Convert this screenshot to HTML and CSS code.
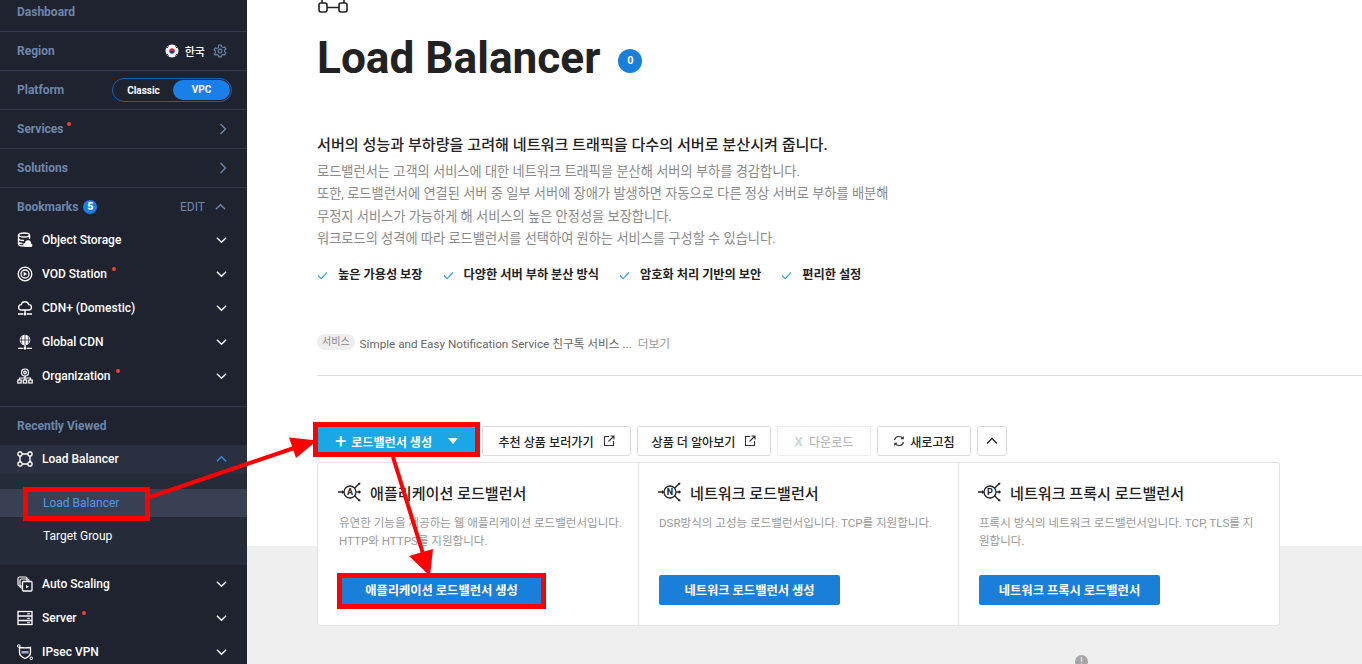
FILE: index.html
```html
<!DOCTYPE html>
<html lang="ko">
<head>
<meta charset="utf-8">
<title>Load Balancer</title>
<link rel="stylesheet" href="styles.css">
</head>
<body>
<svg class="defs" width="0" height="0" aria-hidden="true">
  <symbol id="chev" viewBox="0 0 12 8"><path d="M1 1.500l5 5 5-5" fill="none" stroke="currentColor" stroke-width="1.500"/></symbol>
  <symbol id="lbi" viewBox="0 0 30 24"><g fill="none" stroke="#222" stroke-width="1.600"><circle cx="15" cy="12" r="7.500"/><path d="M0 12h6M21 7l6-6M21 17l6 6M23 12h4"/></g><path d="M5 9.500l3 2.500-3 2.500zM26 9.500l3 2.500-3 2.500z" fill="#222"/><circle cx="26.500" cy="1.500" r="1.500" fill="#222"/><circle cx="26.500" cy="22.500" r="1.500" fill="#222"/></symbol>
</svg>
<div class="app">
  <aside class="side">
    <div class="row row-first"><span class="lab">Dashboard</span></div>
    <div class="row"><span class="lab">Region</span>
      <span class="right">
        <svg class="flag" viewBox="0 0 14 14"><circle cx="7" cy="7" r="6.500" fill="#f4f4f4"/><path d="M4.300 7a2.700 2.700 0 0 1 5.400 0z" fill="#d8263c"/><path d="M4.300 7a2.700 2.700 0 0 0 5.400 0z" fill="#26408f"/><path d="M2 4l1.500-1.500M2 10l1.500 1.500M12 4l-1.500-1.500M12 10l-1.500 1.500" stroke="#222" stroke-width="1"/></svg>
        <span class="kr">한국</span>
        <svg class="gear" viewBox="0 0 14 14"><path d="M5.800 1h2.400l.4 1.700 1.500.8 1.600-.6 1.200 2.100-1.300 1.100v1.700l1.300 1.100-1.200 2.100-1.600-.6-1.500.8-.4 1.700H5.800l-.4-1.700-1.500-.8-1.600.6L1.100 9.900l1.300-1.100V7.100L1.100 6 2.300 3.900l1.600.6 1.500-.8z" fill="none" stroke="#6d87ab" stroke-width="1.100"/><circle cx="7" cy="7" r="1.900" fill="none" stroke="#6d87ab" stroke-width="1.100"/></svg>
      </span>
    </div>
    <div class="row"><span class="lab">Platform</span>
      <span class="toggle"><span class="t-off">Classic</span><span class="t-on">VPC</span></span>
    </div>
    <div class="row"><span class="lab">Services<i class="dot dot-up"></i></span><svg class="chev-r" viewBox="0 0 8 12"><path d="M1.500 1l5 5-5 5" fill="none" stroke="#6d87ab" stroke-width="1.400"/></svg></div>
    <div class="row"><span class="lab">Solutions</span><svg class="chev-r" viewBox="0 0 8 12"><path d="M1.500 1l5 5-5 5" fill="none" stroke="#6d87ab" stroke-width="1.400"/></svg></div>
    <div class="row row-book"><span class="lab">Bookmarks<b class="count">5</b></span><span class="right"><span class="edit">EDIT</span><svg class="chev up-s"><use href="#chev"/></svg></span></div>
    <ul class="list list-book">
      <li class="item"><svg class="ic" viewBox="0 0 16 16"><g fill="none" stroke="#fff" stroke-width="1.400"><ellipse cx="7" cy="3" rx="5.500" ry="2"/><path d="M1.500 3v9c0 1 2 2 5 2M12.500 3v4M1.500 6.500c0 1 2 2 5.500 2M1.500 10c0 1 2 1.500 4 1.500"/></g><path d="M8 15a2 2 0 0 1 0-4 3 3 0 0 1 6 .5 1.800 1.800 0 0 1 0 3.500z" fill="#fff"/></svg><span>Object Storage</span><svg class="chev"><use href="#chev"/></svg></li>
      <li class="item"><svg class="ic" viewBox="0 0 16 16"><g fill="none" stroke="#fff" stroke-width="1.300"><circle cx="8" cy="8" r="6.800"/><circle cx="8" cy="8" r="4"/></g><path d="M6.600 5.800l3.500 2.200-3.500 2.200z" fill="#fff"/></svg><span>VOD Station<i class="dot dot-vod"></i></span><svg class="chev"><use href="#chev"/></svg></li>
      <li class="item"><svg class="ic" viewBox="0 0 16 16"><g fill="none" stroke="#fff" stroke-width="1.300"><path d="M4.500 10a2.700 2.700 0 0 1-.3-5.400 3.900 3.900 0 0 1 7.500 0 2.700 2.700 0 0 1 .1 5.400z"/><path d="M8 10v3M1 14h5M10 14h5"/></g><circle cx="8" cy="14" r="1.500" fill="#fff"/></svg><span>CDN+ (Domestic)</span><svg class="chev"><use href="#chev"/></svg></li>
      <li class="item"><svg class="ic" viewBox="0 0 16 16"><circle cx="8" cy="6" r="5.300" fill="#fff"/><path d="M3 6h10M8 1v10M5 2.500c-1 2-1 5 0 7M11 2.500c1 2 1 5 0 7" stroke="#1f2330" stroke-width=".8" fill="none"/><path d="M8 11v3M1 14.300h5M10 14.300h5" stroke="#fff" stroke-width="1.300"/><circle cx="8" cy="14.300" r="1.400" fill="#fff"/></svg><span>Global CDN</span><svg class="chev"><use href="#chev"/></svg></li>
      <li class="item"><svg class="ic" viewBox="0 0 16 16"><g fill="none" stroke="#fff" stroke-width="1.200"><circle cx="8" cy="4.500" r="3.500"/><circle cx="8" cy="4.500" r="1.300"/><path d="M8 8v2M2.500 12v-2h11v2M8 10v2"/><rect x=".8" y="12" width="3.400" height="3"/><rect x="6.300" y="12" width="3.400" height="3"/><rect x="11.800" y="12" width="3.400" height="3"/></g></svg><span>Organization<i class="dot dot-org"></i></span><svg class="chev"><use href="#chev"/></svg></li>
    </ul>
    <div class="row row-recent"><span class="lab">Recently Viewed</span></div>
    <div class="item item-open"><svg class="ic" viewBox="0 0 16 16"><g fill="none" stroke="#fff" stroke-width="1.400"><rect x="1" y="1" width="4" height="4" rx="1.500"/><rect x="11" y="1" width="4" height="4" rx="1.500"/><rect x="1" y="11" width="4" height="4" rx="1.500"/><rect x="11" y="11" width="4" height="4" rx="1.500"/><path d="M5 3h6M5 13h6M3 5v6M13 5v6"/></g></svg><span>Load Balancer</span><svg class="chev chev-blue"><use href="#chev"/></svg></div>
    <div class="sub">
      <a class="sub-link sub-active">Load Balancer</a>
      <a class="sub-link">Target Group</a>
    </div>
    <ul class="list list-bottom">
      <li class="item"><svg class="ic" viewBox="0 0 16 16"><g fill="none" stroke="#fff" stroke-width="1.200"><rect x="1" y="1" width="9" height="9" rx="1.500"/><rect x="3" y="3" width="9" height="9" rx="1.500"/></g><rect x="5.500" y="5.500" width="9.500" height="9.500" rx="1" fill="#1f2330" stroke="#fff" stroke-width="1.300"/><path d="M9 9l3 1.800L9 12.500z" fill="#fff"/></svg><span>Auto Scaling</span><svg class="chev"><use href="#chev"/></svg></li>
      <li class="item"><svg class="ic" viewBox="0 0 16 16"><g fill="none" stroke="#fff" stroke-width="1.300"><rect x="1" y="1.500" width="14" height="13"/><path d="M1 6h14M1 10.500h14"/></g><path d="M10 3.800h3M10 8.300h3M10 12.700h3" stroke="#fff"/></svg><span>Server<i class="dot dot-srv"></i></span><svg class="chev"><use href="#chev"/></svg></li>
      <li class="item"><svg class="ic" viewBox="0 0 16 16"><g fill="none" stroke="#fff" stroke-width="1.300"><path d="M2.500 3.500c3 .5 8 .5 11 0v5c0 3-3 5-5.500 6-2.500-1-5.500-3-5.500-6z"/></g><path d="M4.500 7h7v2.500h-7z" fill="#9fb0c8"/><circle cx="1.800" cy="2" r="1.300" fill="none" stroke="#fff"/><circle cx="14.300" cy="14.300" r="1.300" fill="none" stroke="#fff"/></svg><span>IPsec VPN</span><svg class="chev"><use href="#chev"/></svg></li>
    </ul>
  </aside>
  <main class="main">
    <svg class="top-ic" viewBox="0 0 30 14"><g fill="none" stroke="#222" stroke-width="1.600"><rect x="1" y="3" width="8" height="9" rx="2"/><rect x="21" y="3" width="8" height="9" rx="2"/><path d="M9 7.500h12M4 3V0M26 3V0"/></g></svg>
    <div class="title-row"><h1 class="title">Load Balancer</h1><span class="zero">0</span></div>
    <p class="lead">서버의 성능과 부하량을 고려해 네트워크 트래픽을 다수의 서버로 분산시켜 줍니다.</p>
    <p class="desc">로드밸런서는 고객의 서비스에 대한 네트워크 트래픽을 분산해 서버의 부하를 경감합니다.<br>또한, 로드밸런서에 연결된 서버 중 일부 서버에 장애가 발생하면 자동으로 다른 정상 서버로 부하를 배분해<br>무정지 서비스가 가능하게 해 서비스의 높은 안정성을 보장합니다.<br>워크로드의 성격에 따라 로드밸런서를 선택하여 원하는 서비스를 구성할 수 있습니다.</p>
    <ul class="checks">
      <li class="check"><svg class="ck" viewBox="0 0 12 10"><path d="M1 5l3.500 3.500L11 1.500" fill="none" stroke="#39a0e0" stroke-width="1.200"/></svg>높은 가용성 보장</li>
      <li class="check"><svg class="ck" viewBox="0 0 12 10"><path d="M1 5l3.500 3.500L11 1.500" fill="none" stroke="#39a0e0" stroke-width="1.200"/></svg>다양한 서버 부하 분산 방식</li>
      <li class="check"><svg class="ck" viewBox="0 0 12 10"><path d="M1 5l3.500 3.500L11 1.500" fill="none" stroke="#39a0e0" stroke-width="1.200"/></svg>암호화 처리 기반의 보안</li>
      <li class="check"><svg class="ck" viewBox="0 0 12 10"><path d="M1 5l3.500 3.500L11 1.500" fill="none" stroke="#39a0e0" stroke-width="1.200"/></svg>편리한 설정</li>
    </ul>
    <div class="notice"><span class="tag">서비스</span><span class="n-text">Simple and Easy Notification Service 친구톡 서비스 ...</span><span class="more">더보기</span></div>
    <div class="tools">
      <button class="btn btn-create"><span class="plus">+</span>로드밸런서 생성<span class="caret"></span></button>
      <button class="btn btn-w149">추천 상품 보러가기<svg class="ext" viewBox="0 0 12 12"><path d="M6 1.500H1.500v9h9V6M7.500 1H11v3.500M11 1L5.500 6.500" fill="none" stroke="#333" stroke-width="1.100"/></svg></button>
      <button class="btn btn-w134">상품 더 알아보기<svg class="ext" viewBox="0 0 12 12"><path d="M6 1.500H1.500v9h9V6M7.500 1H11v3.500M11 1L5.500 6.500" fill="none" stroke="#333" stroke-width="1.100"/></svg></button>
      <button class="btn btn-w94 btn-off"><b class="xl">X</b>다운로드</button>
      <button class="btn btn-w94"><svg class="ref" viewBox="0 0 12 12"><path d="M1.500 5a4.600 4.600 0 0 1 8.300-1.500M10.500 7a4.600 4.600 0 0 1-8.300 1.500" fill="none" stroke="#333" stroke-width="1.100"/><path d="M10.800 1v3.300H7.500zM1.200 11V7.700h3.300z" fill="#333"/></svg>새로고침</button>
      <button class="btn btn-w30"><svg class="chev-sm" viewBox="0 0 12 8"><path d="M1 6.500l5-5 5 5" fill="none" stroke="#222" stroke-width="1.300"/></svg></button>
    </div>
    <div class="cards">
      <section class="card">
        <h2 class="c-title"><span class="c-ic"><svg viewBox="0 0 30 24"><use href="#lbi"/></svg><em class="c-let">A</em></span>애플리케이션 로드밸런서</h2>
        <p class="c-desc c-nowrap">유연한 기능을 제공하는 웹 애플리케이션 로드밸런서입니다.<br>HTTP와 HTTPS를 지원합니다.</p>
        <button class="c-btn c-btn-wide">애플리케이션 로드밸런서 생성</button>
      </section>
      <section class="card">
        <h2 class="c-title"><span class="c-ic"><svg viewBox="0 0 30 24"><use href="#lbi"/></svg><em class="c-let">N</em></span>네트워크 로드밸런서</h2>
        <p class="c-desc">DSR방식의 고성능 로드밸런서입니다. TCP를 지원합니다.</p>
        <button class="c-btn">네트워크 로드밸런서 생성</button>
      </section>
      <section class="card">
        <h2 class="c-title"><span class="c-ic"><svg viewBox="0 0 30 24"><use href="#lbi"/></svg><em class="c-let">P</em></span>네트워크 프록시 로드밸런서</h2>
        <p class="c-desc">프록시 방식의 네트워크 로드밸런서입니다. TCP, TLS를 지원합니다.</p>
        <button class="c-btn">네트워크 프록시 로드밸런서</button>
      </section>
    </div>
    <span class="info-dot">!</span>
  </main>
</div>
<svg class="annot" viewBox="0 0 1362 664" aria-hidden="true">
  <g fill="none" stroke="#ff0000" stroke-width="5">
    <rect x="25.500" y="489.500" width="122" height="29"/>
    <rect x="315.500" y="424.500" width="162" height="30"/>
    <rect x="339.500" y="575.500" width="204" height="31"/>
  </g>
  <path d="M150 497L300 446M393 457L425 560" fill="none" stroke="#ff0000" stroke-width="4"/>
  <path d="M317 440.500L289 437.500 296 458zM430 576L409 556 433 549z" fill="#ff0000"/>
</svg>
</body>
</html>
```

FILE: styles.css
```css
* { box-sizing: border-box; }
html, body { margin: 0; padding: 0; height: 664px; overflow: hidden; background: #fff; }
body { font-family: Roboto, "Noto Sans CJK KR", sans-serif; color: #222; position: relative; }
.defs { position: absolute; }
ul { list-style: none; margin: 0; padding: 0; }
button { font-family: inherit; }

.app { display: flex; height: 664px; }

.side { width: 247px; flex: none; background: #1f2330; margin-top: -7px; height: 671px; overflow: hidden; font-size: 12px; font-weight: 500; }
.row { height: 39px; padding: 0 17px; border-bottom: 1px solid #353b4c; display: flex; align-items: center; justify-content: space-between; color: #6d87ab; }
.row-book { height: 35px; border: 0; padding-top: 3px; }
.row-recent { height: 39px; border: 0; border-top: 1px solid #353b4c; padding-top: 0; }
.lab { position: relative; font-weight: 700; display: flex; align-items: center; }
.right { display: flex; align-items: center; }
.flag { width: 14px; height: 14px; margin-right: 6px; }
.kr { color: #fff; font-size: 11px; margin-right: 8px; }
.gear { width: 14px; height: 14px; margin-right: 3px; }
.toggle { width: 120px; height: 24px; margin-right: -2px; border: 1px solid #1f5f9f; border-radius: 12px; display: flex; align-items: center; font-size: 10px; font-weight: 700; color: #fff; padding: 1px; }
.t-off { width: 59px; text-align: center; }
.t-on { flex: 1; height: 20px; line-height: 20px; border-radius: 10px; background: #1a7fe8; text-align: center; }
.chev-r { width: 8px; height: 12px; margin-right: 3px; }
.dot { position: absolute; width: 4px; height: 4px; border-radius: 50%; background: #f0402f; }
.dot-up { left: 50px; top: 0; }
.dot-vod { left: 70px; top: 0; }
.dot-org { left: 74px; top: 0; }
.dot-srv { left: 40px; top: 0; }
.count { width: 14px; height: 14px; margin-left: 5px; border-radius: 50%; background: #1a7fe8; color: #fff; font-size: 10px; line-height: 14px; text-align: center; }
.edit { font-weight: 400; margin-right: 10px; color: #6d87ab; }
.chev { width: 11px; height: 8px; color: #fff; flex: none; margin-left: auto; margin-right: 5px; }
.up-s { transform: rotate(180deg); color: #6d87ab; margin-right: 4px; }
.list-book { padding-bottom: 13px; }
.item { height: 34px; padding-left: 17px; padding-right: 15px; display: flex; align-items: center; color: #fff; font-weight: 500; }
.item > span { position: relative; }
.ic { width: 16px; height: 16px; margin-right: 9px; flex: none; }
.item-open { height: 29px; padding-bottom: 2px; background: #2b3040; }
.chev-blue { color: #2f8fe8; transform: rotate(180deg); }
.sub { height: 91px; background: #262b39; padding: 15px 0; display: flex; flex-direction: column; gap: 5px; }
.sub-link { height: 28px; line-height: 28px; padding-left: 43px; color: #fff; font-weight: 400; }
.sub-active { background: #3a4054; color: #4a9bf0; }
.list-bottom { padding-top: 2px; }

.main { flex: 1; min-width: 0; height: 664px; padding-left: 70px; background: linear-gradient(#fff 546px, #efefef 546px); position: relative; }
.top-ic { display: block; width: 30px; height: 14px; margin-left: 1px; }
.title-row { display: flex; align-items: center; margin-top: 17px; height: 54px; }
.title { margin: 0; font-size: 44.200px; line-height: 54px; font-weight: 700; color: #222; }
.zero { width: 24px; height: 24px; margin-left: 18px; margin-top: 6px; border-radius: 50%; background: #1a7fd8; color: #fff; font-size: 11px; font-weight: 700; line-height: 24px; text-align: center; }
.lead { margin: 50px 0 0; font-size: 15.120px; line-height: 20px; font-weight: 500; color: #222; }
.desc { margin: 6px 0 0; font-size: 13.220px; line-height: 22.300px; color: #8a8a8a; }
.checks { display: flex; margin-top: 16px; height: 18px; font-size: 12.200px; font-weight: 700; color: #222; }
.check { display: flex; align-items: center; margin-right: 20px; line-height: 18px; }
.ck { width: 11px; height: 9px; margin-right: 10px; }
.notice { display: flex; align-items: center; margin-top: 48px; height: 20px; font-size: 11.700px; color: #666; }
.tag { height: 16px; line-height: 16px; padding: 0 5px; border-radius: 8px; background: #eee; color: #888; font-size: 10px; margin-right: 5px; }
.more { margin-left: 6px; color: #999; }
.tools { margin-top: 23px; padding-top: 50px; border-top: 1px solid #ddd; display: flex; gap: 6px; height: 87px; align-items: flex-start; }
.btn { height: 30px; padding: 0; border: 1px solid #ddd; border-radius: 2px; background: #fff; color: #222; font-size: 12.100px; font-weight: 500; display: flex; align-items: center; justify-content: center; }
.btn-create { width: 159px; background: #1aa7e5; border: 0; color: #fff; font-weight: 700; }
.plus { font-size: 20px; font-weight: 400; margin-right: 5px; line-height: 1; }
.caret { width: 0; height: 0; margin-left: 16px; border-left: 5px solid transparent; border-right: 5px solid transparent; border-top: 6px solid #fff; }
.btn-w149 { width: 149px; }
.btn-w134 { width: 134px; }
.btn-w94 { width: 94px; }
.btn-w30 { width: 30px; }
.btn-off { border-color: #eee; color: #bbb; }
.xl { color: #c5dccb; font-size: 13px; margin-right: 6px; }
.ext { width: 12px; height: 12px; margin-left: 9px; }
.ref { width: 12px; height: 12px; margin-right: 5px; }
.chev-sm { width: 12px; height: 8px; }
.cards { width: 963px; height: 164px; display: flex; background: #fff; border: 1px solid #e3e3e3; border-radius: 3px; }
.card { flex: 0 0 320px; min-width: 0; padding: 0 20px; border-left: 1px solid #e3e3e3; position: relative; }
.card:first-child { border-left: 0; padding-left: 21px; }
.card:last-child { flex: 1 1 0; }
.c-title { margin: 17px 0 0; height: 24px; font-size: 15.100px; font-weight: 500; color: #222; display: flex; align-items: center; }
.c-ic { position: relative; width: 24px; height: 20px; margin: 0 8px 0 -1px; }
.c-ic svg { width: 24px; height: 20px; display: block; }
.c-let { position: absolute; left: 7px; top: 5px; width: 10px; text-align: center; font-style: normal; font-size: 9px; line-height: 10px; font-weight: 700; }
.c-desc { margin: 10px 0 0; height: 36px; font-size: 11.550px; line-height: 18px; color: #999; }
.c-nowrap { white-space: nowrap; }
.c-btn { display: block; margin-top: 25px; width: 181px; height: 30px; border: 0; border-radius: 2px; background: #1a7fd8; color: #fff; font-size: 12.250px; font-weight: 700; padding: 0; }
.c-btn-wide { width: 205px; }
.info-dot { position: absolute; left: 828px; top: 655px; width: 13px; height: 13px; border-radius: 50%; background: #a5a5a5; color: #fff; font-size: 9px; line-height: 13px; text-align: center; }

.annot { position: absolute; left: 0; top: 0; width: 1362px; height: 664px; pointer-events: none; }
```
